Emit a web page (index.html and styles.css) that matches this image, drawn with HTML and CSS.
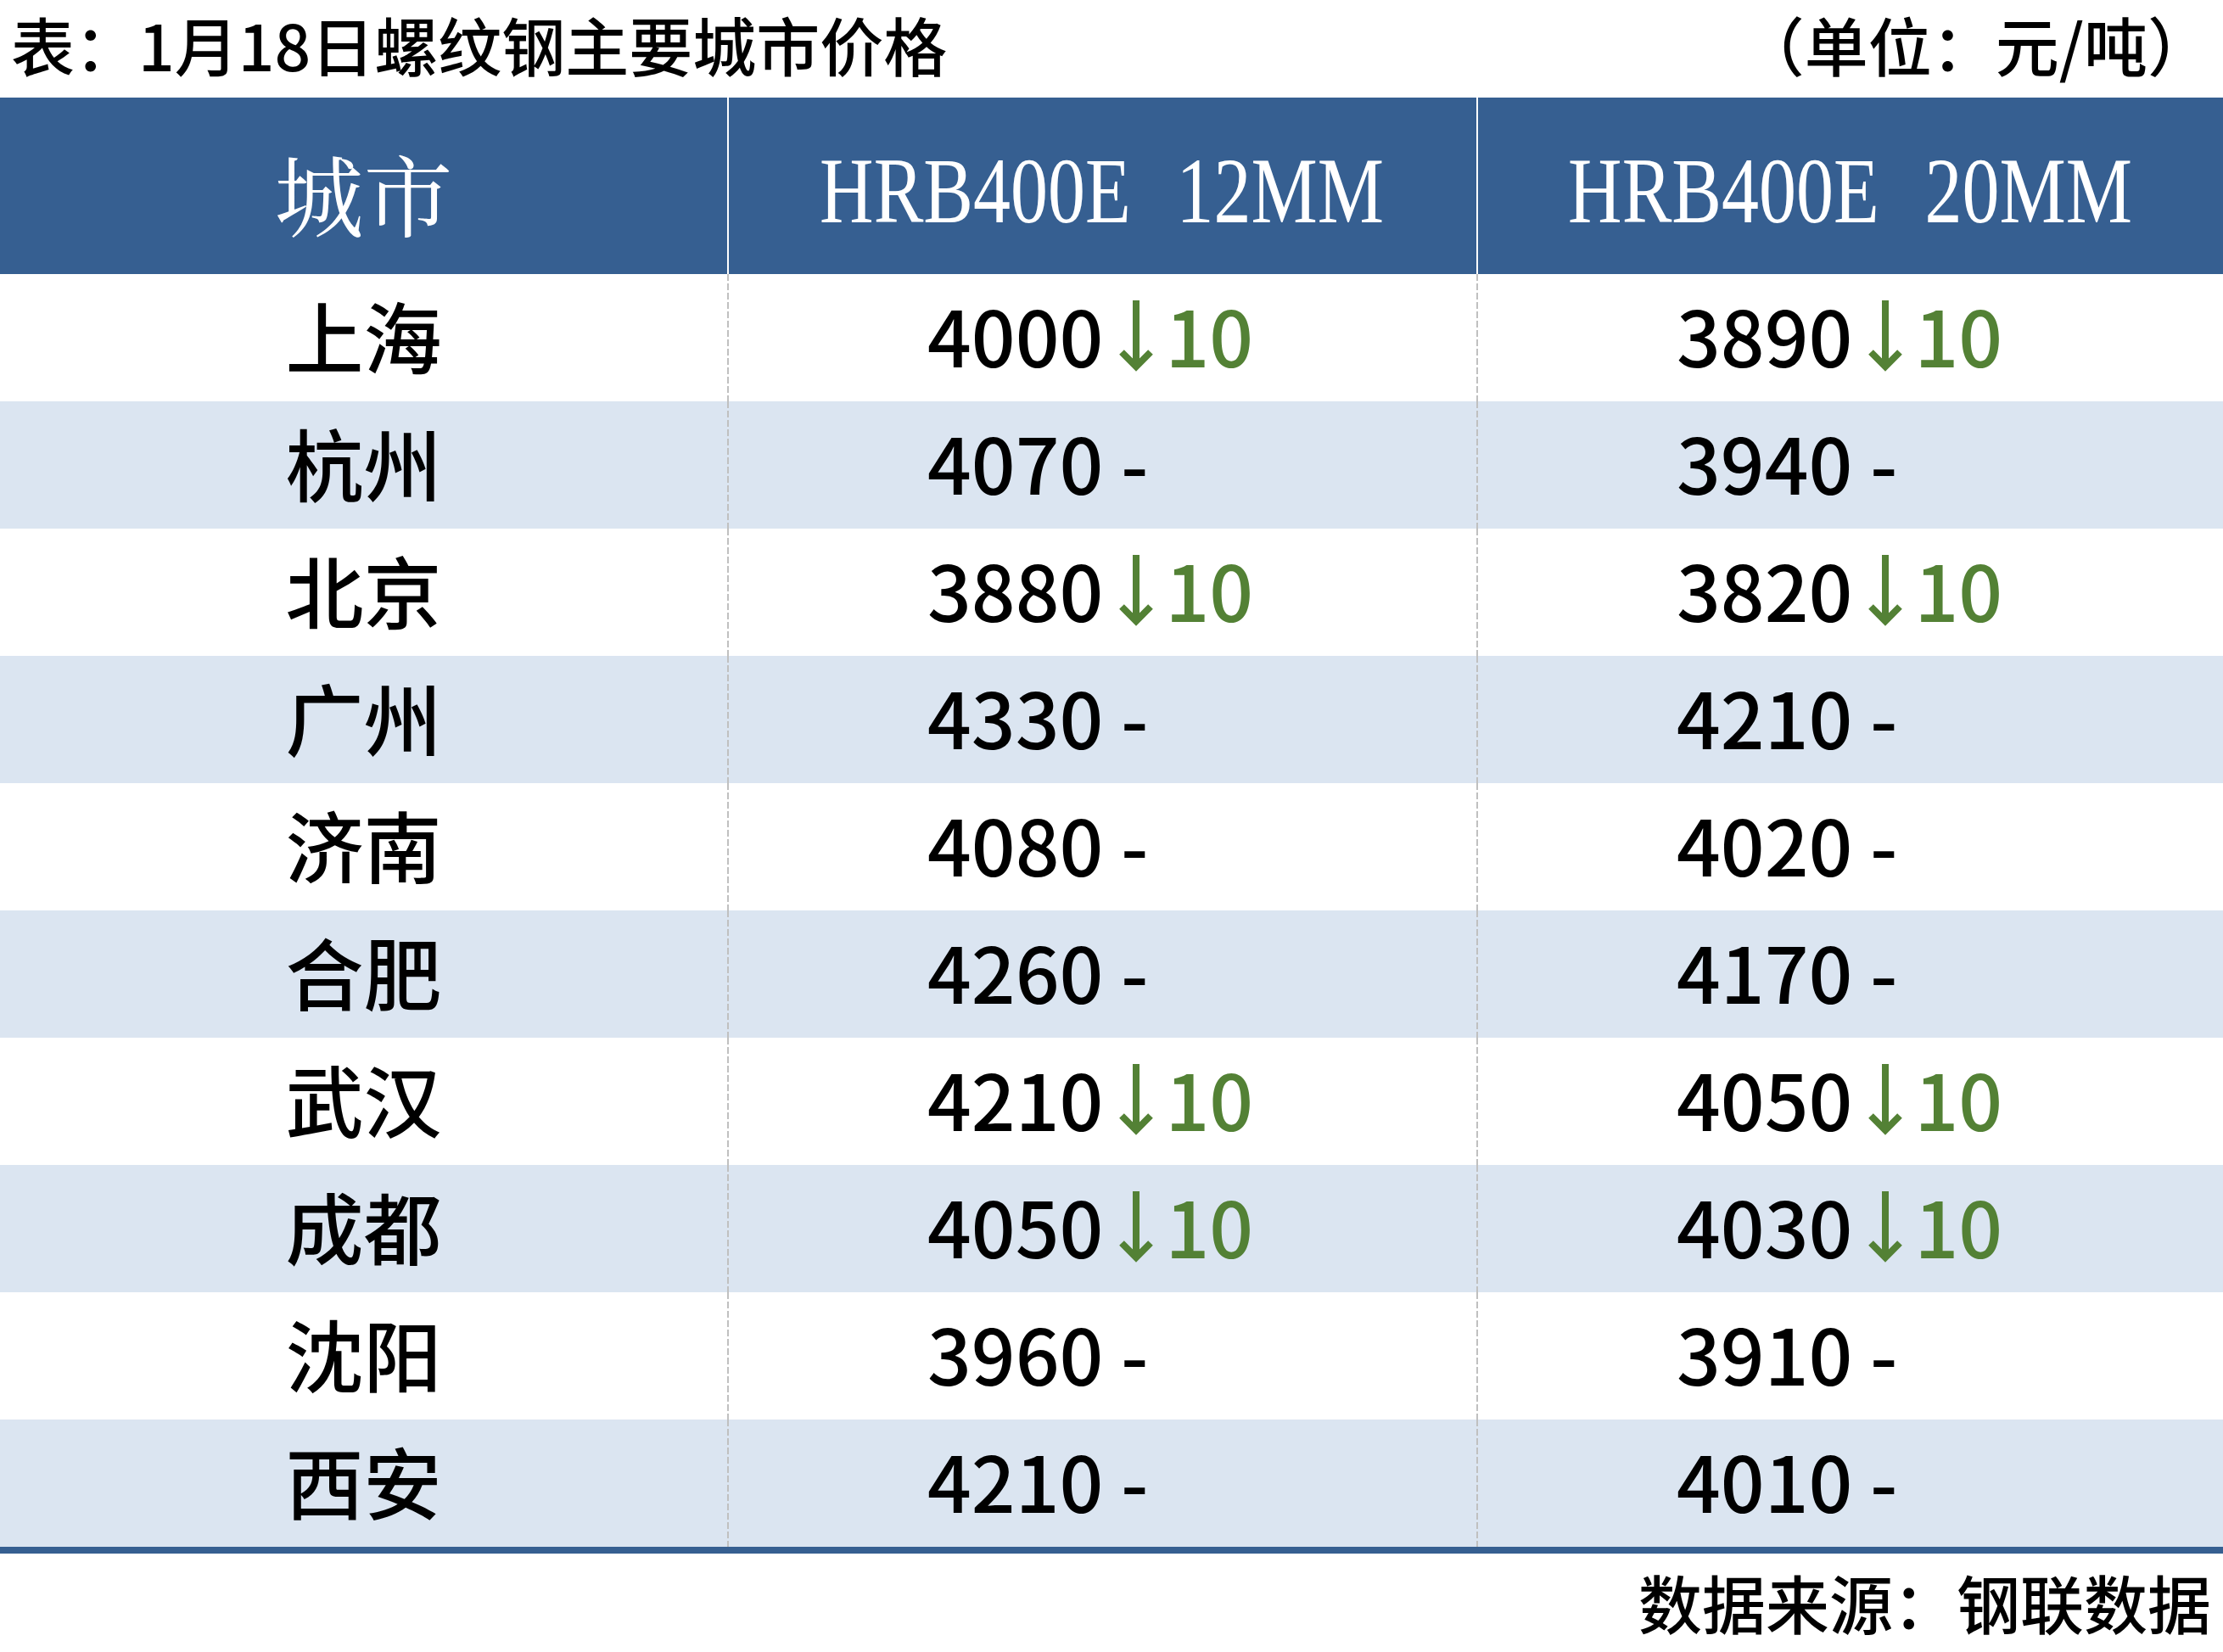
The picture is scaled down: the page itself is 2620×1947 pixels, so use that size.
FILE: index.html
```html
<!DOCTYPE html>
<html lang="zh-CN">
<head>
<meta charset="utf-8">
<title>1月18日螺纹钢主要城市价格</title>
<link rel="stylesheet" href="styles.css">
</head>
<body>
<div class="page">
  <header class="caption">
    <h1 class="title">表：1月18日螺纹钢主要城市价格</h1>
    <span class="unit">（单位：元/吨）</span>
  </header>
  <table class="prices">
    <colgroup><col class="c1"><col class="c2"><col class="c3"></colgroup>
    <thead>
      <tr>
        <th class="h-city">城市</th>
        <th><span class="spec">HRB400E  12MM</span></th>
        <th><span class="spec">HRB400E  20MM</span></th>
      </tr>
    </thead>
    <tbody>
      <tr>
        <td class="city">上海</td>
        <td class="val">4000<span class="chg"><svg class="arrow" viewBox="0 0 42 84" width="42" height="84"><path d="M21 0V78M4 61L21 78L38 61"/></svg>10</span></td>
        <td class="val">3890<span class="chg"><svg class="arrow" viewBox="0 0 42 84" width="42" height="84"><path d="M21 0V78M4 61L21 78L38 61"/></svg>10</span></td>
      </tr>
      <tr>
        <td class="city">杭州</td>
        <td class="val">4070 -</td>
        <td class="val">3940 -</td>
      </tr>
      <tr>
        <td class="city">北京</td>
        <td class="val">3880<span class="chg"><svg class="arrow" viewBox="0 0 42 84" width="42" height="84"><path d="M21 0V78M4 61L21 78L38 61"/></svg>10</span></td>
        <td class="val">3820<span class="chg"><svg class="arrow" viewBox="0 0 42 84" width="42" height="84"><path d="M21 0V78M4 61L21 78L38 61"/></svg>10</span></td>
      </tr>
      <tr>
        <td class="city">广州</td>
        <td class="val">4330 -</td>
        <td class="val">4210 -</td>
      </tr>
      <tr>
        <td class="city">济南</td>
        <td class="val">4080 -</td>
        <td class="val">4020 -</td>
      </tr>
      <tr>
        <td class="city">合肥</td>
        <td class="val">4260 -</td>
        <td class="val">4170 -</td>
      </tr>
      <tr>
        <td class="city">武汉</td>
        <td class="val">4210<span class="chg"><svg class="arrow" viewBox="0 0 42 84" width="42" height="84"><path d="M21 0V78M4 61L21 78L38 61"/></svg>10</span></td>
        <td class="val">4050<span class="chg"><svg class="arrow" viewBox="0 0 42 84" width="42" height="84"><path d="M21 0V78M4 61L21 78L38 61"/></svg>10</span></td>
      </tr>
      <tr>
        <td class="city">成都</td>
        <td class="val">4050<span class="chg"><svg class="arrow" viewBox="0 0 42 84" width="42" height="84"><path d="M21 0V78M4 61L21 78L38 61"/></svg>10</span></td>
        <td class="val">4030<span class="chg"><svg class="arrow" viewBox="0 0 42 84" width="42" height="84"><path d="M21 0V78M4 61L21 78L38 61"/></svg>10</span></td>
      </tr>
      <tr>
        <td class="city">沈阳</td>
        <td class="val">3960 -</td>
        <td class="val">3910 -</td>
      </tr>
      <tr>
        <td class="city">西安</td>
        <td class="val">4210 -</td>
        <td class="val">4010 -</td>
      </tr>
    </tbody>
  </table>
  <footer class="source">数据来源：钢联数据</footer>
</div>
</body>
</html>
```

FILE: styles.css
```css
* { box-sizing: border-box; }

html, body {
  margin: 0;
  padding: 0;
  background: #ffffff;
}

body {
  width: 2620px;
  height: 1947px;
  overflow: hidden;
  font-family: "Noto Sans CJK SC", "Noto Sans", sans-serif;
  color: #000000;
}

.caption {
  display: flex;
  justify-content: space-between;
  align-items: center;
  height: 115px;
  padding: 0 14px 12px 13px;
  font-size: 75px;
  font-weight: 500;
  line-height: 1;
}

.title {
  margin: 0;
  font-size: inherit;
  font-weight: inherit;
}

.prices {
  width: 2620px;
  table-layout: fixed;
  border-collapse: separate;
  border-spacing: 0;
  border-bottom: 8px solid #365f91;
}

col.c1 { width: 857px; }
col.c2 { width: 883px; }
col.c3 { width: 880px; }

.prices th {
  height: 208px;
  padding: 12px 0 0;
  background: #365f91;
  color: #ffffff;
  font-weight: normal;
  text-align: center;
  vertical-align: middle;
  line-height: 1;
}

.prices th + th {
  box-shadow: inset 2px 0 0 #ffffff;
}

.h-city {
  font-family: "Noto Serif CJK SC", "Source Han Serif SC", "Noto Sans CJK SC", serif;
  font-size: 105px;
  font-weight: 300;
}

.spec {
  display: inline-block;
  font-family: "Liberation Serif", "Times New Roman", serif;
  font-size: 110px;
  white-space: pre;
  word-spacing: 6px;
  transform: scaleX(0.8);
}

.prices td {
  height: 150px;
  padding: 0 0 9px;
  vertical-align: middle;
  line-height: 1;
}

.prices tbody tr:nth-child(even) {
  background: #dbe5f1;
}

.prices td + td {
  background-image: repeating-linear-gradient(to bottom, #c0c0c0 0 8px, transparent 8px 11px);
  background-size: 2px 100%;
  background-repeat: no-repeat;
  background-position: left top;
}

.city {
  text-align: center;
  font-size: 92px;
  font-weight: 500;
}

.val {
  text-align: left;
  padding-left: 236px !important;
  font-size: 91px;
  font-weight: 500;
  white-space: nowrap;
}

.chg {
  color: #538135;
}

.arrow {
  display: inline-block;
  width: 42px;
  height: 84px;
  margin: 0 13px 0 18px;
  vertical-align: -5px;
  fill: none;
  stroke: currentColor;
  stroke-width: 8;
  stroke-linejoin: miter;
}

.source {
  height: 116px;
  display: flex;
  align-items: center;
  justify-content: flex-end;
  padding: 0 14px 4px 0;
  font-size: 75px;
  font-weight: 500;
  line-height: 1;
}
```
